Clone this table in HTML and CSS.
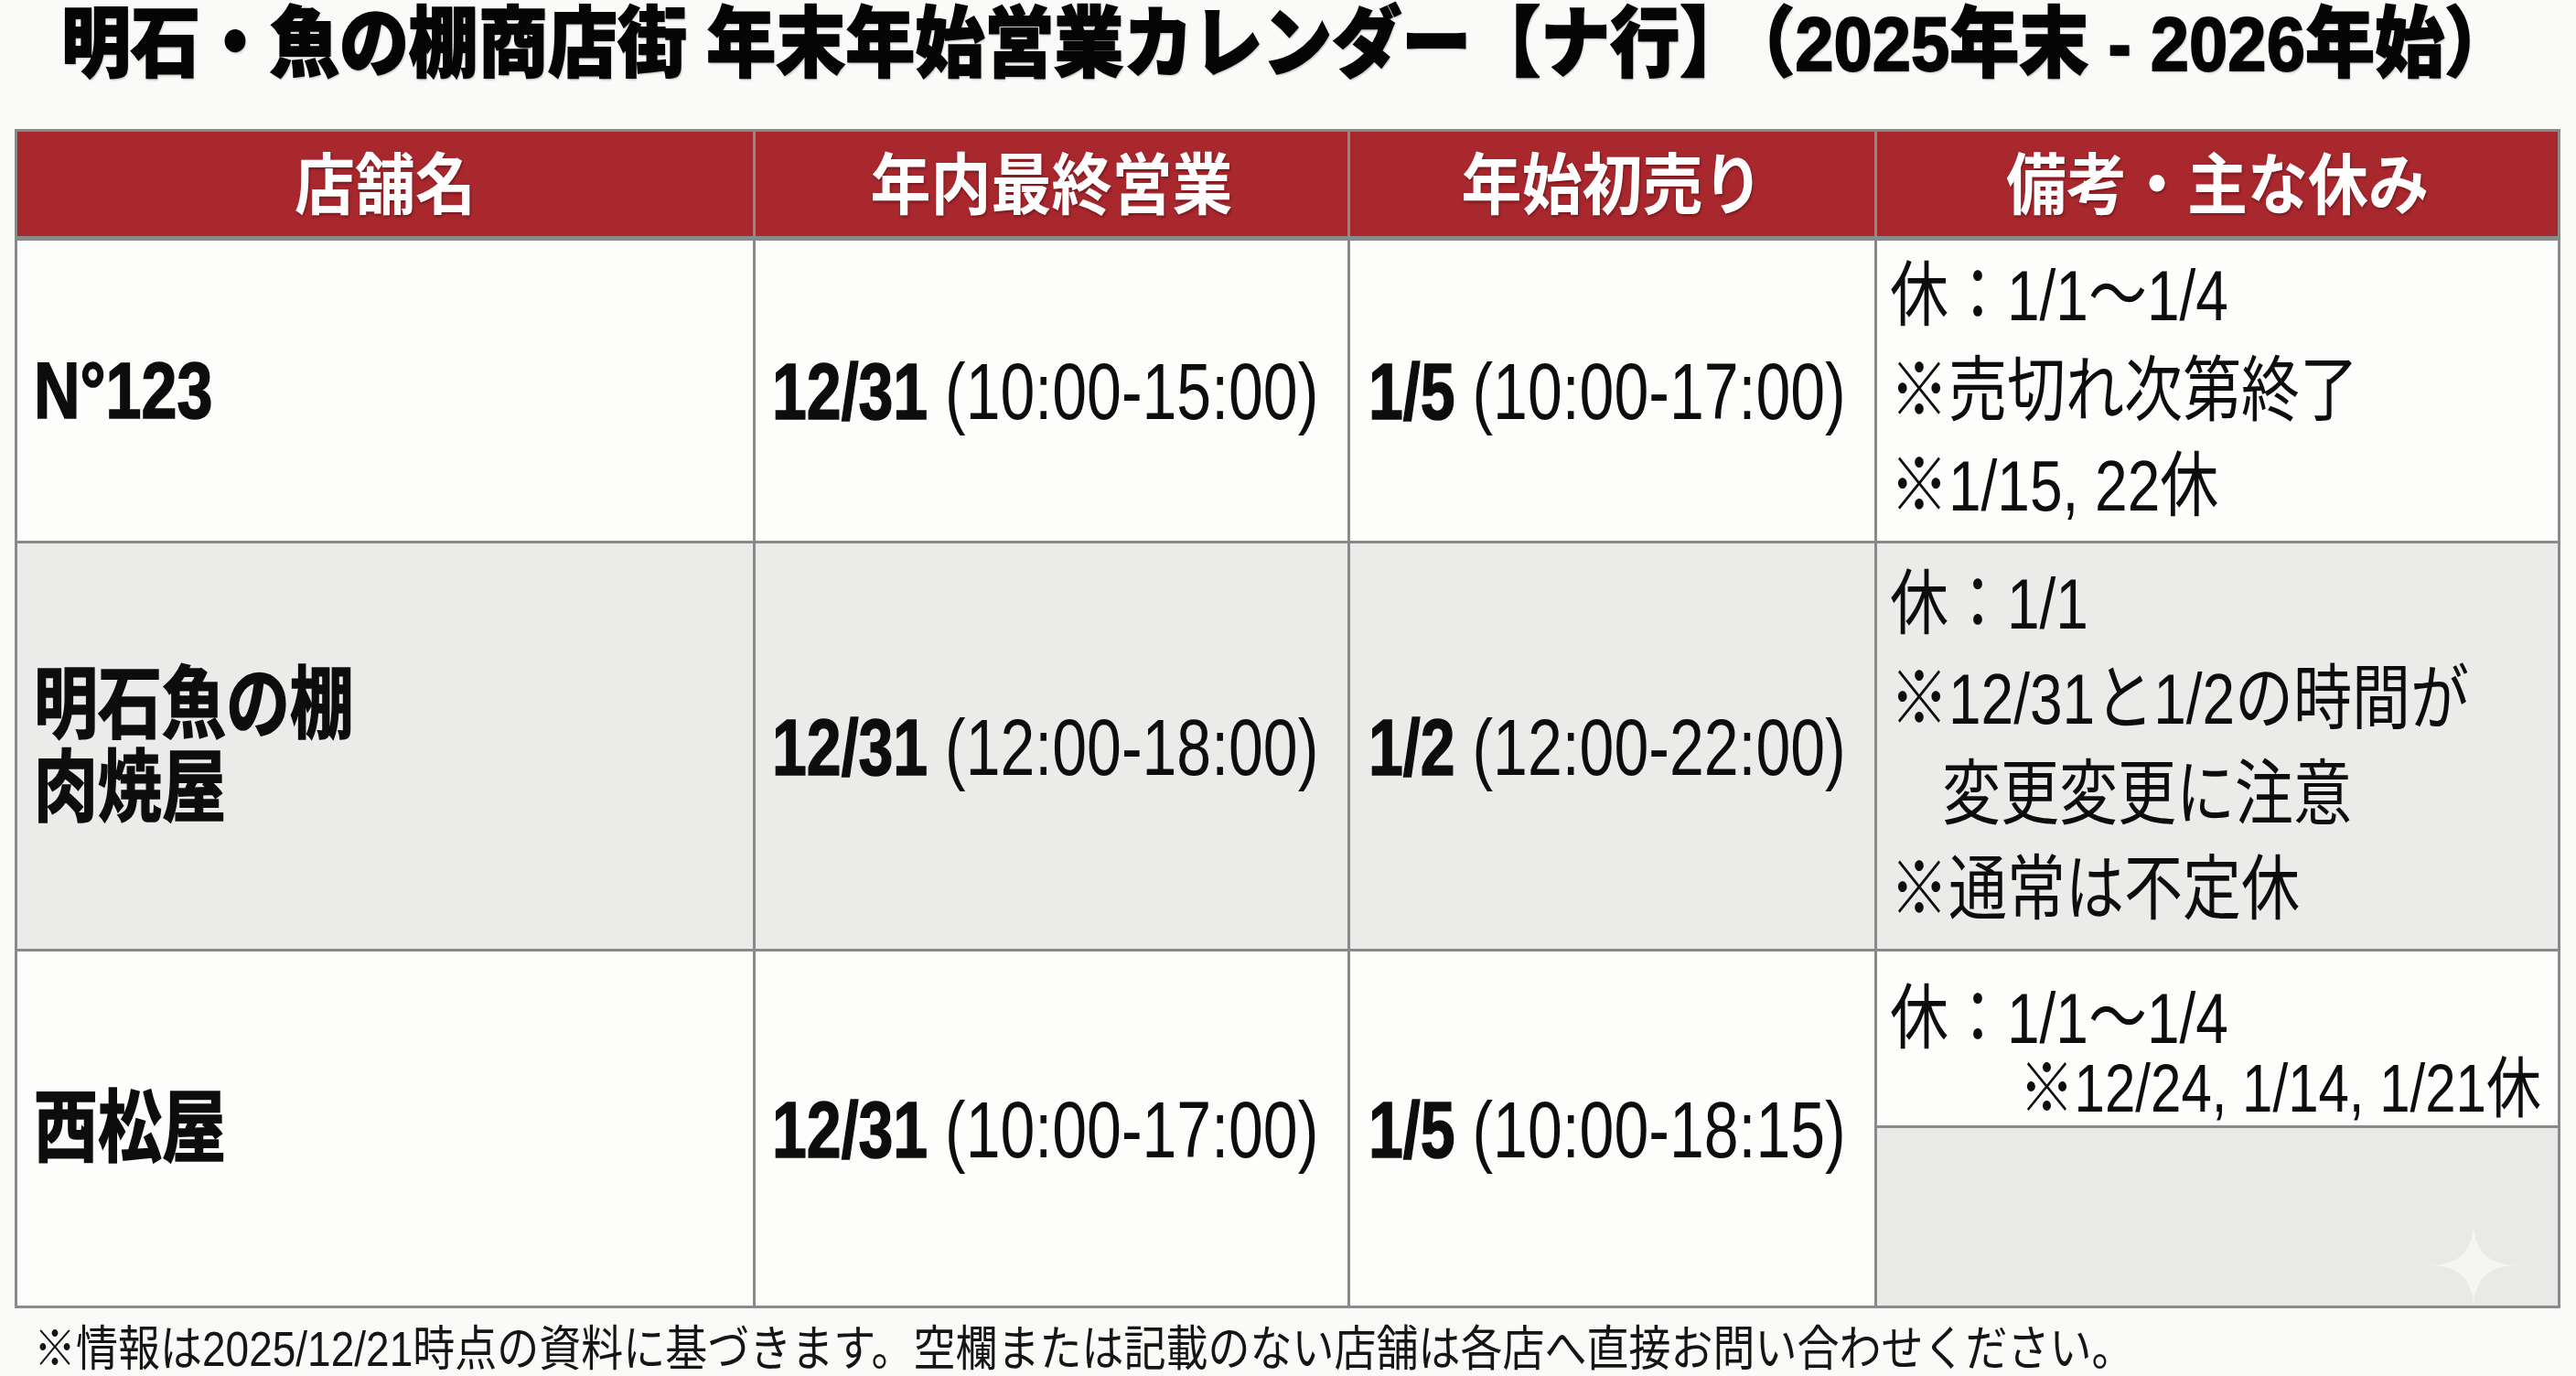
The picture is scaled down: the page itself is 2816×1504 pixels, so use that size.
FILE: index.html
```html
<!DOCTYPE html>
<html lang="ja">
<head>
<meta charset="utf-8">
<title>明石・魚の棚商店街 年末年始営業カレンダー【ナ行】</title>
<link rel="stylesheet" href="styles.css">
</head>
<body>
<div class="page">
  <h1 class="title"><span class="ln">明石・魚の棚商店街 年末年始営業カレンダー【ナ行】<span class="gap">（2025年末 - 2026年始）</span></span></h1>
  <div class="grid">
    <div class="hd"><span class="ln">店舗名</span></div>
    <div class="hd"><span class="ln">年内最終営業</span></div>
    <div class="hd"><span class="ln">年始初売り</span></div>
    <div class="hd"><span class="ln">備考・主な休み</span></div>

    <div class="c name r1"><div class="ln">N°123</div></div>
    <div class="c time r1"><div class="ln"><b>12/31</b> (10:00-15:00)</div></div>
    <div class="c time r1 t3"><div class="ln"><b>1/5</b> (10:00-17:00)</div></div>
    <div class="c note r1">
      <div class="ln">休：1/1～1/4</div>
      <div class="ln">※売切れ次第終了</div>
      <div class="ln">※1/15, 22休</div>
    </div>

    <div class="c name r2"><div class="ln">明石魚の棚</div><div class="ln">肉焼屋</div></div>
    <div class="c time r2"><div class="ln"><b>12/31</b> (12:00-18:00)</div></div>
    <div class="c time r2 t3"><div class="ln"><b>1/2</b> (12:00-22:00)</div></div>
    <div class="c note r2">
      <div class="ln">休：1/1</div>
      <div class="ln">※12/31と1/2の時間が</div>
      <div class="ln ind">変更変更に注意</div>
      <div class="ln">※通常は不定休</div>
    </div>

    <div class="c name r3"><div class="ln">西松屋</div></div>
    <div class="c time r3"><div class="ln"><b>12/31</b> (10:00-17:00)</div></div>
    <div class="c time r3 t3"><div class="ln"><b>1/5</b> (10:00-18:15)</div></div>
    <div class="split">
      <div class="top">
        <div class="ln">休：1/1～1/4</div>
        <div class="ln right">※12/24, 1/14, 1/21休</div>
      </div>
      <div class="bot">
        <svg class="star" viewBox="0 0 100 100" aria-hidden="true">
          <path d="M50 0 Q50 50 100 50 Q50 50 50 100 Q50 50 0 50 Q50 50 50 0 Z" fill="#f5f5f3"/>
        </svg>
      </div>
    </div>
  </div>
  <p class="foot"><span class="ln">※情報は2025/12/21時点の資料に基づきます。空欄または記載のない店舗は各店へ直接お問い合わせください。</span></p>
</div>
</body>
</html>
```
FILE: styles.css
```css
html, body {
  margin: 0;
  background: #fafaf8;
}

body {
  font-family: "Liberation Sans", "Noto Sans CJK JP", sans-serif;
  color: #0d0d0d;
}

.page {
  padding: 0 17px 0 16px;
}

.title {
  margin: 0;
  height: 96px;
  line-height: 96px;
  font-size: 76px;
  font-weight: 900;
  text-align: center;
  white-space: nowrap;
  color: #050505;
  -webkit-text-stroke: 1.6px #050505;
  text-shadow: 1px 2px 2px rgba(0, 0, 0, 0.25);
}

.title .ln {
  display: inline-block;
  transform: scaleY(1.1);
}

.title .gap {
  margin-left: 12px;
}

.grid {
  margin-top: 45px;
  display: grid;
  grid-template-columns: 804px 647px 573px 744px;
  grid-template-rows: 116px 328px 443px 387px;
  gap: 3px;
  background: #8a8a8a;
  border: 3px solid #8a8a8a;
}

.hd {
  background: #a9282e;
  color: #ffffff;
  font-size: 66px;
  font-weight: 700;
  display: flex;
  align-items: center;
  justify-content: center;
  padding-bottom: 10px;
  border-bottom: 2px solid #8a8a8a;
  text-shadow: 1px 2px 3px rgba(60, 0, 0, 0.45);
}

.hd .ln {
  display: inline-block;
  transform: scaleY(1.1);
}

.c {
  display: flex;
  flex-direction: column;
  justify-content: center;
  padding-left: 18px;
  min-width: 0;
}

.r1, .r3 {
  background: #fdfdfc;
}

.r2 {
  background: #ebebea;
}

.name {
  font-size: 70px;
  font-weight: 700;
  -webkit-text-stroke: 1.4px #0d0d0d;
}

.name .ln {
  line-height: 91px;
  transform: scaleY(1.24);
  white-space: nowrap;
}

.time {
  font-size: 68px;
}

.t3 {
  padding-left: 20px;
}

.time b {
  font-weight: 700;
  -webkit-text-stroke: 1.2px #0d0d0d;
}

.time .ln {
  line-height: 90px;
  transform: scaleY(1.28);
  white-space: nowrap;
}

.note {
  font-size: 64px;
  padding-left: 14px;
}

.note .ln {
  line-height: 104px;
  transform: scaleY(1.22);
  white-space: nowrap;
}

.note .ind {
  padding-left: 57px;
}

.split {
  display: flex;
  flex-direction: column;
  gap: 3px;
  background: #8a8a8a;
}

.split .top {
  height: 190px;
  box-sizing: border-box;
  padding: 34px 18px 0 14px;
  background: #fdfdfc;
  font-size: 64px;
}

.split .top .ln {
  line-height: 78px;
  transform: scaleY(1.22);
  white-space: nowrap;
}

.split .top .right {
  font-size: 60px;
  text-align: right;
}

.split .bot {
  flex: 1;
  background: #e9e9e7;
  position: relative;
  overflow: hidden;
}

.star {
  position: absolute;
  right: 44px;
  bottom: -6px;
  width: 96px;
  height: 100px;
}

.foot {
  margin: 0;
  padding-left: 21px;
  font-size: 46px;
  line-height: 90px;
  white-space: nowrap;
  color: #151515;
}

.foot .ln {
  display: inline-block;
  transform: scaleY(1.15);
}
```
